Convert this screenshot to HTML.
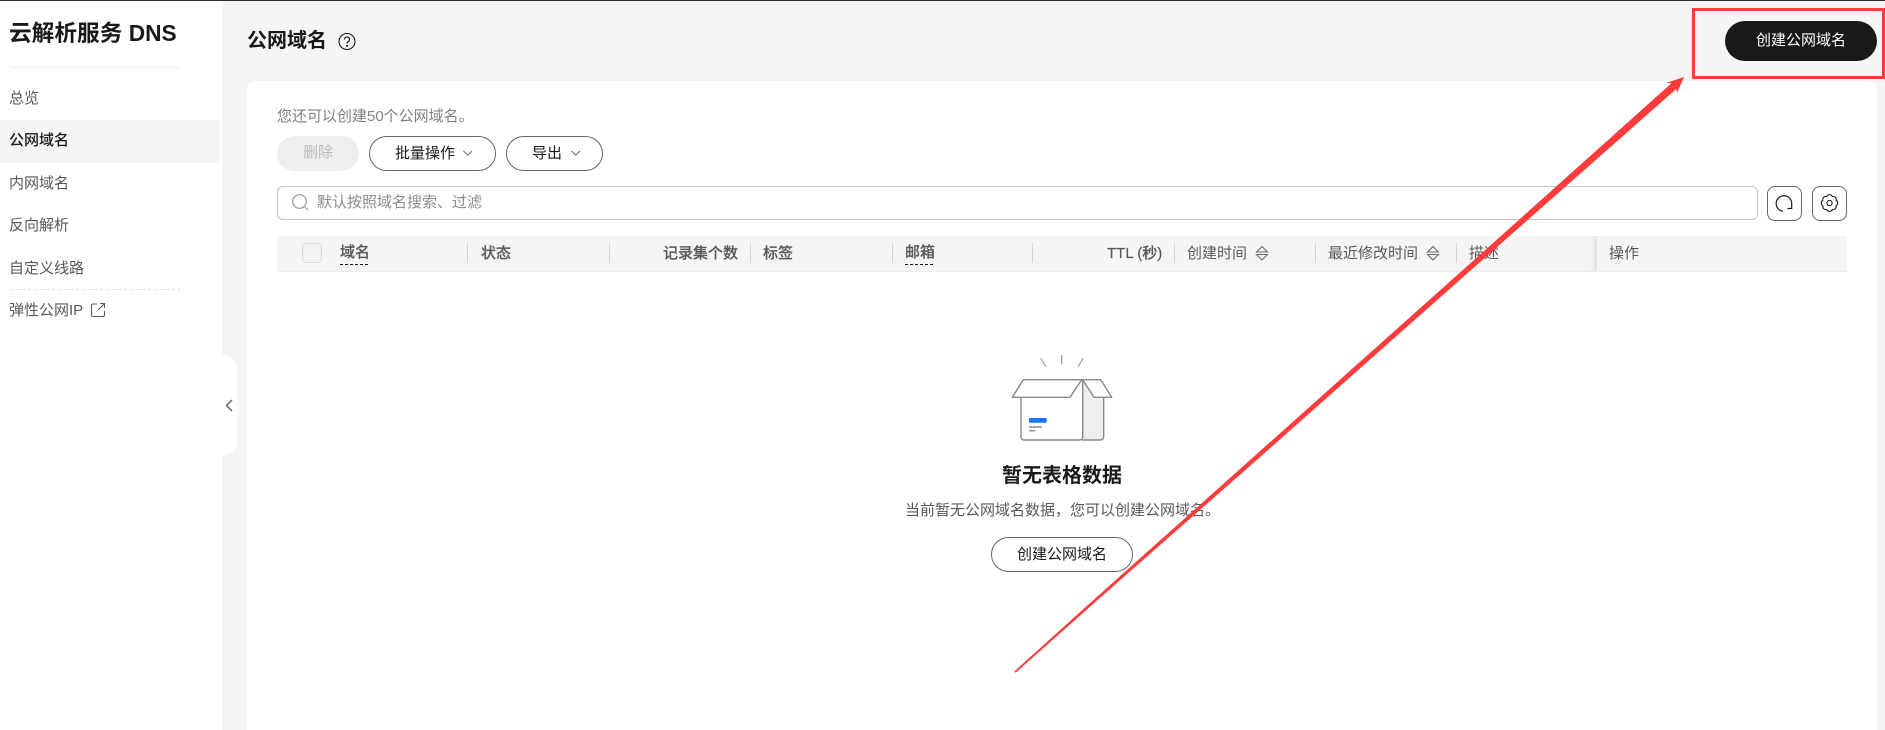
<!DOCTYPE html>
<html lang="zh-CN">
<head>
<meta charset="utf-8">
<title>云解析服务 DNS</title>
<style>
html,body{margin:0;padding:0;width:1885px;height:730px;overflow:hidden;background:#f5f5f5}
body{position:relative;font-family:"Liberation Sans","Noto Sans CJK SC",sans-serif;font-size:15px;color:#191919}
.a{position:absolute;box-sizing:border-box}
.t{position:absolute;white-space:nowrap;line-height:20px;height:20px}
.nav{color:#595959}
.h{color:#595959;font-weight:500;-webkit-text-stroke:.2px #595959}
.r{-webkit-text-stroke:0;font-weight:400}
.sep{position:absolute;top:243px;width:1px;height:20px;background:#d4d4d4}
.ul{position:absolute;top:264px;height:1px;width:30px;background-image:repeating-linear-gradient(90deg,#191919 0 3px,transparent 3px 5px)}
.btn{position:absolute;box-sizing:border-box;border:1px solid #666;border-radius:18px;background:#fff}
svg{position:absolute;overflow:visible}
</style>
</head>
<body>
<div class="a" style="left:0;top:0;width:1885px;height:1px;background:#2a2d36;z-index:5"></div>
<div class="a" style="left:0;top:1px;width:222px;height:729px;background:#fff"></div>
<div class="t" style="left:9px;top:23px;font-size:22.7px;font-weight:700;color:#191919">云解析服务 DNS</div>
<div class="a" style="left:10px;top:67px;width:170px;height:1px;background:#eee"></div>
<div class="t nav" style="left:9px;top:89px">总览</div>
<div class="a" style="left:0;top:120px;width:220px;height:43px;background:#f5f5f5"></div>
<div class="t" style="left:9px;top:131px;font-weight:500;color:#191919">公网域名</div>
<div class="t nav" style="left:9px;top:174px">内网域名</div>
<div class="t nav" style="left:9px;top:216px">反向解析</div>
<div class="t nav" style="left:9px;top:259px">自定义线路</div>
<div class="a" style="left:10px;top:289px;width:170px;height:1px;background-image:repeating-linear-gradient(90deg,#ddd 0 3px,transparent 3px 6px)"></div>
<div class="t nav" style="left:9px;top:301px">弹性公网IP</div>
<svg style="left:0;top:0" width="1" height="1" fill="none" stroke="#595959" stroke-width="1.100">
<path d="M97 304H93a1.500 1.500 0 0 0-1.500 1.500V315a1.500 1.500 0 0 0 1.500 1.500H103a1.500 1.500 0 0 0 1.500-1.500V311"/>
<path d="M98 310L104.500 303.500M100 303.500H104.500V308"/>
</svg>

<div class="a" style="left:222px;top:355px;width:15px;height:100px;background:#fff;border-radius:0 13px 13px 0"></div>
<svg style="left:0;top:0" width="1" height="1" fill="none" stroke="#666" stroke-width="1.500"><path d="M232 400L226.500 405.500L232 411"/></svg>

<div class="t" style="left:247px;top:31px;font-size:20px;font-weight:700;color:#191919">公网域名</div>
<svg style="left:0;top:0" width="1" height="1" fill="none" stroke="#191919" stroke-width="1.100">
<circle cx="347" cy="41.500" r="8"/>
<path d="M344.500 39.500a2.500 2.500 0 1 1 3.800 2.100c-.9.600-1.300 1-1.300 2"/>
<circle cx="347" cy="45.800" r=".5"/>
</svg>
<div class="a" style="left:1725px;top:21px;width:152px;height:40px;background:#191919;border-radius:20px"></div>
<div class="t" style="left:1756px;top:31px;color:#fff">创建公网域名</div>

<div class="a" style="left:247px;top:81px;width:1630px;height:649px;background:#fff;border-radius:9px 9px 0 0"></div>
<div class="t" style="left:277px;top:107px;color:#808080">您还可以创建50个公网域名。</div>

<div class="a" style="left:277px;top:136px;width:82px;height:35px;background:#eee;border-radius:18px"></div>
<div class="t" style="left:303px;top:143px;color:#bbb">删除</div>
<div class="btn" style="left:369px;top:136px;width:127px;height:35px"></div>
<div class="t" style="left:395px;top:144px">批量操作</div>
<div class="btn" style="left:506px;top:136px;width:97px;height:35px"></div>
<div class="t" style="left:532px;top:144px">导出</div>
<svg style="left:0;top:0" width="1" height="1" fill="none" stroke="#666" stroke-width="1">
<path d="M463.500 151L467.700 155.200L472 151"/>
<path d="M571.500 151L575.700 155.200L580 151"/>
</svg>

<div class="a" style="left:277px;top:186px;width:1481px;height:34px;border:1px solid #c6c6c6;border-radius:6px;background:#fff"></div>
<svg style="left:0;top:0" width="1" height="1" fill="none" stroke="#999" stroke-width="1.200">
<circle cx="299.500" cy="201.500" r="6.800"/>
<path d="M304.500 206.500L308 210"/>
</svg>
<div class="t" style="left:317px;top:193px;color:#8c8c8c">默认按照域名搜索、过滤</div>

<div class="a" style="left:1767px;top:186px;width:35px;height:35px;border:1px solid #666;border-radius:8px;background:#fff"></div>
<div class="a" style="left:1812px;top:186px;width:35px;height:35px;border:1px solid #666;border-radius:8px;background:#fff"></div>
<svg style="left:0;top:0" width="1" height="1" fill="none" stroke="#191919" stroke-width="1.200">
<path d="M1783 211.300A7.800 7.800 0 1 1 1791.700 202.500V208.500H1787.500"/>
<g transform="translate(1829.500 203) scale(.88) translate(-1829 -203)">
<path d="M1825.800 195.600a3.500 3.500 0 0 1 6.400 0a3.500 3.500 0 0 1 4.300 4.300a3.500 3.500 0 0 1 0 6.200a3.500 3.500 0 0 1-4.300 4.300a3.500 3.500 0 0 1-6.400 0a3.500 3.500 0 0 1-4.300-4.300a3.500 3.500 0 0 1 0-6.200a3.500 3.500 0 0 1 4.300-4.300z"/>
<circle cx="1829" cy="203" r="3"/>
</g>
</svg>

<div class="a" style="left:277px;top:236px;width:1570px;height:36px;background:#f5f5f5;border-bottom:1px solid #ececec"></div>
<div class="a" style="left:302px;top:243px;width:20px;height:20px;background:#f2f2f2;border:1px solid #dcdcdc;border-radius:4px"></div>
<div class="t h" style="left:340px;top:243px">域名</div><div class="ul" style="left:340px"></div>
<div class="sep" style="left:467px"></div>
<div class="t h" style="left:481px;top:244px">状态</div>
<div class="sep" style="left:609px"></div>
<div class="t h" style="left:663px;top:244px">记录集个数</div>
<div class="sep" style="left:750px"></div>
<div class="t h" style="left:763px;top:244px">标签</div>
<div class="sep" style="left:892px"></div>
<div class="t h" style="left:905px;top:243px">邮箱</div><div class="ul" style="left:905px"></div>
<div class="sep" style="left:1032px"></div>
<div class="t h" style="left:1107px;top:244px">TTL (秒)</div>
<div class="sep" style="left:1174px"></div>
<div class="t h r" style="left:1187px;top:244px">创建时间</div>
<div class="sep" style="left:1315px"></div>
<div class="t h r" style="left:1328px;top:244px">最近修改时间</div>
<div class="sep" style="left:1456px"></div>
<div class="t h r" style="left:1469px;top:244px">描述</div>
<div class="a" style="left:1591px;top:236px;width:6px;height:35px;background:linear-gradient(90deg,rgba(0,0,0,0),rgba(0,0,0,.09))"></div>
<div class="t h r" style="left:1609px;top:244px">操作</div>
<svg style="left:0;top:0" width="1" height="1" fill="none" stroke="#666" stroke-width="1">
<path d="M1256.500 252L1262 246.500L1267.500 252Z M1256.500 254.500L1262 260L1267.500 254.500Z"/>
<path d="M1427.500 252L1433 246.500L1438.500 252Z M1427.500 254.500L1433 260L1438.500 254.500Z"/>
</svg>

<svg style="left:0;top:0" width="1" height="1" fill="none" stroke="#8a8a8a" stroke-width="1.400" stroke-linejoin="round" stroke-linecap="round">
<path d="M1041 359L1045.700 366.300M1061.700 355.700V364M1082.700 359L1078.300 366.300" stroke="#a8a8a8"/>
<path d="M1082.700 381V440H1100.700a3 3 0 0 0 3-3V397.300H1094Z" fill="#eee" stroke="none"/>
<path d="M1021 397.300V437a3 3 0 0 0 3 3H1079.700a3 3 0 0 0 3-3V380"/>
<path d="M1082.700 440H1100.700a3 3 0 0 0 3-3V397.300"/>
<path d="M1023.300 379.700H1081.700L1070 397.300H1012.300Z" fill="#fff"/>
<path d="M1082.700 379.700H1100.700L1111.700 397.300H1094Z" fill="#fff"/>
<rect x="1029" y="418" width="17.700" height="4.800" rx="1" fill="#1476ff" stroke="none"/>
<path d="M1029 427H1042M1029 430.700H1035" stroke-linecap="butt"/>
</svg>
<div class="t" style="left:1002px;top:466px;font-size:20px;font-weight:700;color:#191919;line-height:20px">暂无表格数据</div>
<div class="t" style="left:905px;top:501px;color:#595959">当前暂无公网域名数据，您可以创建公网域名。</div>
<div class="btn" style="left:991px;top:537px;width:142px;height:35px"></div>
<div class="t" style="left:1017px;top:545px">创建公网域名</div>

<svg style="left:0;top:0;z-index:10" width="1885" height="730">
<rect x="1693.500" y="9.500" width="190" height="68" fill="none" stroke="#ff3b3b" stroke-width="3"/>
<polygon fill="#ff3b3b" points="1014.400,671.300 1099,595 1248.500,461.400 1498.100,238.500 1671.500,83.200 1666.700,82.700 1684,77 1677,93 1676.500,88.800 1501.900,242.700 1251.500,464.600 1101,597 1015.600,672.700"/>
</svg>
</body>
</html>
